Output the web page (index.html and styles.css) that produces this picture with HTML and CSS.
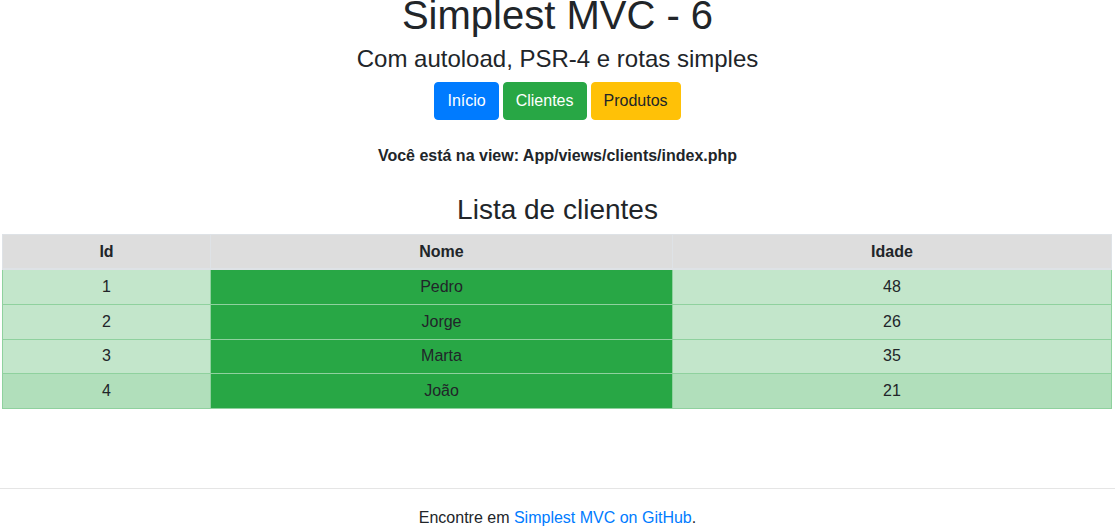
FILE: index.html
```html
<!DOCTYPE html>
<html lang="pt-br">
<head>
<meta charset="utf-8">
<title>Simplest MVC - 6</title>
<link rel="stylesheet" href="styles.css">
</head>
<body>
<header class="top">
  <h1 class="title">Simplest MVC - 6</h1>
  <h4 class="subtitle">Com autoload, PSR-4 e rotas simples</h4>
  <nav class="nav">
    <a class="btn btn-primary" href="#">Início</a>
    <a class="btn btn-success" href="#">Clientes</a>
    <a class="btn btn-warning" href="#">Produtos</a>
  </nav>
</header>
<main class="content">
  <p class="view-info">Você está na view: App/views/clients/index.php</p>
  <h3 class="list-title">Lista de clientes</h3>
  <table class="table">
    <colgroup>
      <col class="col-id">
      <col class="col-nome">
      <col class="col-idade">
    </colgroup>
    <thead>
      <tr><th>Id</th><th>Nome</th><th>Idade</th></tr>
    </thead>
    <tbody>
      <tr class="row-success"><td>1</td><td class="cell-green">Pedro</td><td>48</td></tr>
      <tr class="row-success"><td>2</td><td class="cell-green">Jorge</td><td>26</td></tr>
      <tr class="row-success"><td>3</td><td class="cell-green">Marta</td><td>35</td></tr>
      <tr class="row-success row-hover"><td>4</td><td class="cell-green">João</td><td>21</td></tr>
    </tbody>
  </table>
</main>
<footer class="footer">
  <p>Encontre em <a class="link" href="#">Simplest MVC on GitHub</a>.</p>
</footer>
</body>
</html>
```

FILE: styles.css
```css
* { box-sizing: border-box; }

html, body {
  margin: 0;
  padding: 0;
  background: #fff;
}

body {
  font-family: "Liberation Sans", Arial, sans-serif;
  font-size: 16px;
  line-height: 1.5;
  color: #212529;
  overflow: hidden;
}

.top {
  text-align: center;
  margin-top: -9px;
}

.title {
  font-size: 40px;
  font-weight: 400;
  line-height: 1.2;
  margin: 0 0 6px;
}

.subtitle {
  font-size: 24px;
  font-weight: 400;
  line-height: 1.2;
  margin: 0 0 8px;
}

.nav {
  display: flex;
  justify-content: center;
  gap: 4px;
}

.btn {
  display: inline-block;
  padding: 6px 12px;
  font-size: 16px;
  line-height: 24px;
  border: 1px solid transparent;
  border-radius: 4px;
  text-decoration: none;
}

.btn-primary { background: #007bff; border-color: #007bff; color: #fff; }
.btn-success { background: #28a745; border-color: #28a745; color: #fff; }
.btn-warning { background: #ffc107; border-color: #ffc107; color: #212529; }

.content {
  text-align: center;
}

.view-info {
  font-weight: 700;
  margin: 24.5px 0 0;
}

.list-title {
  font-size: 28px;
  font-weight: 400;
  line-height: 1.2;
  margin: 25px 0 7px;
}

.table {
  width: 1109px;
  margin: 0 0 0 2px;
  border-collapse: collapse;
  table-layout: fixed;
}

.col-id { width: 208px; }
.col-nome { width: 462px; }
.col-idade { width: 439px; }

.table th,
.table td {
  padding: 4.8px;
  text-align: center;
  vertical-align: top;
  line-height: 24px;
}

.table th {
  background: #dddddd;
  font-weight: 700;
  border: 1px solid #dee2e6;
  border-bottom-width: 2px;
}

.row-success td {
  background: #c3e6cb;
  border: 1px solid #8fd19e;
}

.row-hover td {
  background: #b1dfbb;
}

.row-success td.cell-green {
  background: #28a745;
}

.footer {
  margin-top: 79px;
  border-top: 1px solid #e5e5e5;
  padding-top: 17px;
  text-align: center;
}

.footer p {
  margin: 0;
}

.link {
  color: #007bff;
  text-decoration: none;
}
```
